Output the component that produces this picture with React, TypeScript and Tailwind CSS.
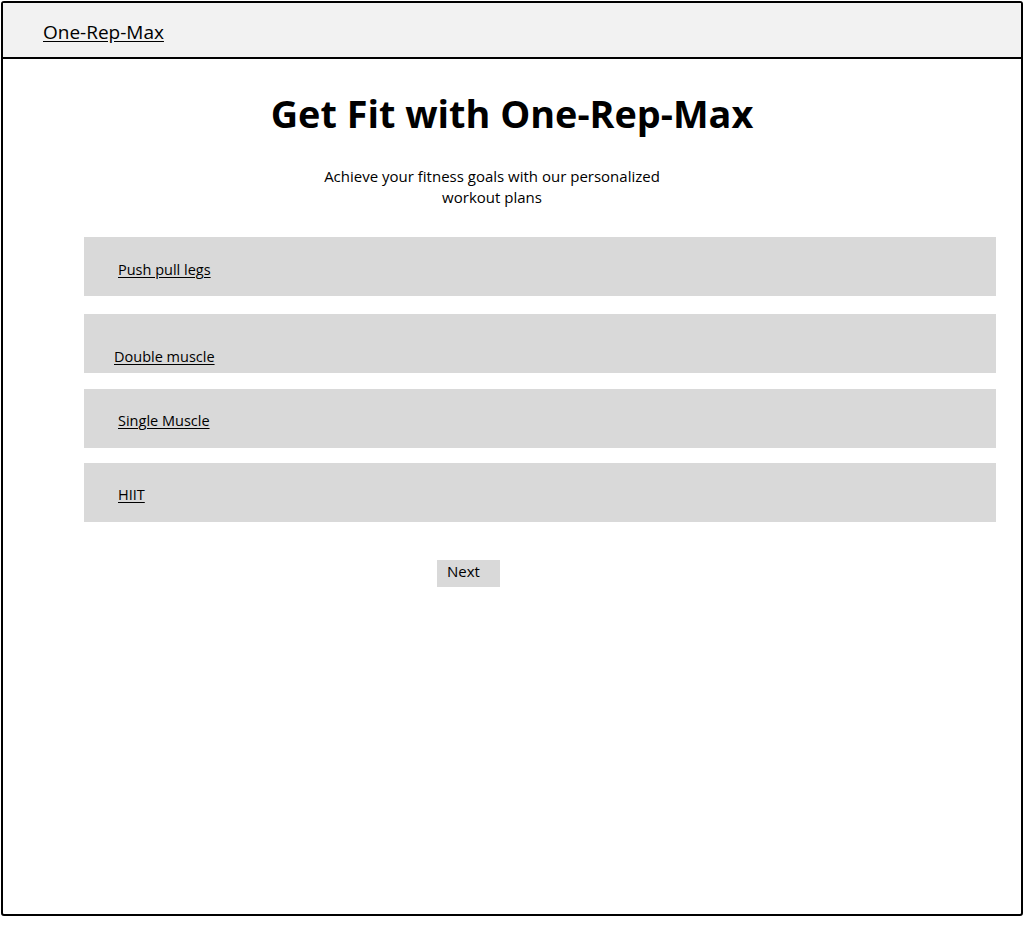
const PLANS = [
  { label: "Push pull legs", box: "mt-0", pad: "pl-[34px] pt-[20px]" },
  { label: "Double muscle", box: "mt-[18px]", pad: "pl-[30px] pt-[30px]" },
  { label: "Single Muscle", box: "mt-[16px]", pad: "pl-[34px] pt-[19px]" },
  { label: "HIIT", box: "mt-[15px]", pad: "pl-[34px] pt-[19px]" },
];

export default function App() {
  return (
    <div
      className="h-[938px] w-[1024px] bg-white pl-px pt-px text-black"
      style={{ fontFamily: '"Comic Sans MS", "Open Sans", sans-serif' }}
    >
      <div className="h-[915px] w-[1022px] rounded-[3px] border-2 border-black">
        {/* top bar */}
        <header className="flex h-[56px] items-center border-b-2 border-black bg-[#f2f2f2] pl-[40px] pt-[5px]">
          <a href="#" className="text-[19px] underline underline-offset-2">
            One-Rep-Max
          </a>
        </header>

        <main className="flex flex-col">
          <h1 className="mt-[27px] text-center text-[37.8px] font-bold leading-[56px]">
            Get Fit with One-Rep-Max
          </h1>
          <p className="mx-auto mt-[24px] w-[400px] pr-[40px] text-center text-[15px] leading-[21px]">
            Achieve your fitness goals with our personalized workout plans
          </p>

          <div className="ml-[81px] mt-[29px] flex w-[912px] flex-col">
            {PLANS.map((p) => (
              <div key={p.label} className={`h-[59px] bg-[#d9d9d9] ${p.box} ${p.pad}`}>
                <a href="#" className="text-[14.5px] leading-[22px] underline underline-offset-2">
                  {p.label}
                </a>
              </div>
            ))}
          </div>

          <div className="ml-[434px] mt-[37px]">
            <button className="h-[27px] w-[63px] bg-[#d9d9d9] pb-[4px] pl-[10px] text-left text-[15px] leading-[22px]">
              Next
            </button>
          </div>
        </main>
      </div>
    </div>
  );
}
